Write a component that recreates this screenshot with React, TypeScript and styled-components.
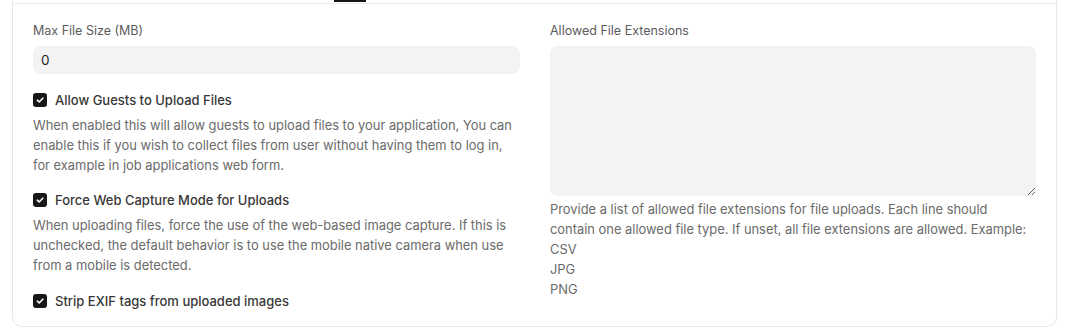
import React from "react";
import styled, { createGlobalStyle } from "styled-components";

const Global = createGlobalStyle`
  html, body { margin: 0; padding: 0; background: #ffffff; }
  body { font-family: Inter, "Noto Sans", sans-serif; -webkit-font-smoothing: antialiased; }
  * { box-sizing: border-box; }
`;

const Card = styled.div`
  margin: 0 13px 0 12px;
  border: 1px solid #e8e8e8;
  border-top: none;
  border-radius: 0 0 10px 10px;
  background: #fff;
`;

const TabBar = styled.div`
  height: 4px;
  display: flex;
  align-items: flex-end;
  padding: 0 0 1px 321px;
  border-bottom: 1px solid #ededed;
`;

const TabIndicator = styled.div`
  width: 32px;
  height: 2px;
  background: #171717;
`;

const Body = styled.div`
  display: grid;
  grid-template-columns: 487px 486px;
  column-gap: 30px;
  padding: 19px 20px 15px;
`;

const Column = styled.div`
  display: flex;
  flex-direction: column;
`;

const Label = styled.div`
  font-size: 12.5px;
  line-height: 16px;
  color: #5c5c5c;
  margin-bottom: 7px;
`;

const Input = styled.input`
  height: 28px;
  border: none;
  border-radius: 8px;
  background: #f3f3f3;
  padding: 0 8px;
  font-family: inherit;
  font-size: 13.5px;
  color: #262626;
  outline: none;
`;

const TextArea = styled.textarea`
  height: 150px;
  border: none;
  border-radius: 8px;
  background: #f3f3f3;
  padding: 6px 8px;
  font-family: inherit;
  font-size: 13px;
  resize: vertical;
  outline: none;
`;

const CheckRow = styled.label<{ $gap: number }>`
  display: flex;
  align-items: center;
  gap: 8px;
  height: 20px;
  margin-top: ${(p) => p.$gap}px;
  font-size: 13px;
  font-weight: 500;
  color: #383838;
`;

const Box = styled.span`
  width: 14px;
  height: 14px;
  border-radius: 3px;
  background: #171717;
  display: inline-flex;
  align-items: center;
  justify-content: center;
  flex: none;
`;

const Desc = styled.div<{ $gap: number }>`
  margin-top: ${(p) => p.$gap}px;
  font-size: 12.9px;
  line-height: 20px;
  color: #6b6b6b;
`;

const Check = ({ label, gap }: { label: string; gap: number }) => (
  <CheckRow $gap={gap}>
    <Box>
      <svg width="10" height="10" viewBox="0 0 10 10" fill="none">
        <path d="M2.3 5.2 L4.2 7 L7.8 3.2" stroke="#fff" strokeWidth="1.6" strokeLinecap="round" strokeLinejoin="round" />
      </svg>
    </Box>
    {label}
  </CheckRow>
);

export default function App() {
  return (
    <>
      <Global />
      <Card>
        <TabBar>
          <TabIndicator />
        </TabBar>
        <Body>
          <Column>
            <Label>Max File Size (MB)</Label>
            <Input defaultValue="0" />
            <Check label="Allow Guests to Upload Files" gap={16} />
            <Desc $gap={6}>
              When enabled this will allow guests to upload files to your application, You can enable this if you wish to collect files from user without having them to log in, for example in job applications web form.
            </Desc>
            <Check label="Force Web Capture Mode for Uploads" gap={14} />
            <Desc $gap={6}>
              When uploading files, force the use of the web-based image capture. If this is unchecked, the default behavior is to use the mobile native camera when use from a mobile is detected.
            </Desc>
            <Check label="Strip EXIF tags from uploaded images" gap={15} />
          </Column>
          <Column>
            <Label>Allowed File Extensions</Label>
            <TextArea />
            <Desc $gap={4}>
              Provide a list of allowed file extensions for file uploads. Each line should contain one allowed file type. If unset, all file extensions are allowed. Example:
              <br />CSV
              <br />JPG
              <br />PNG
            </Desc>
          </Column>
        </Body>
      </Card>
    </>
  );
}
